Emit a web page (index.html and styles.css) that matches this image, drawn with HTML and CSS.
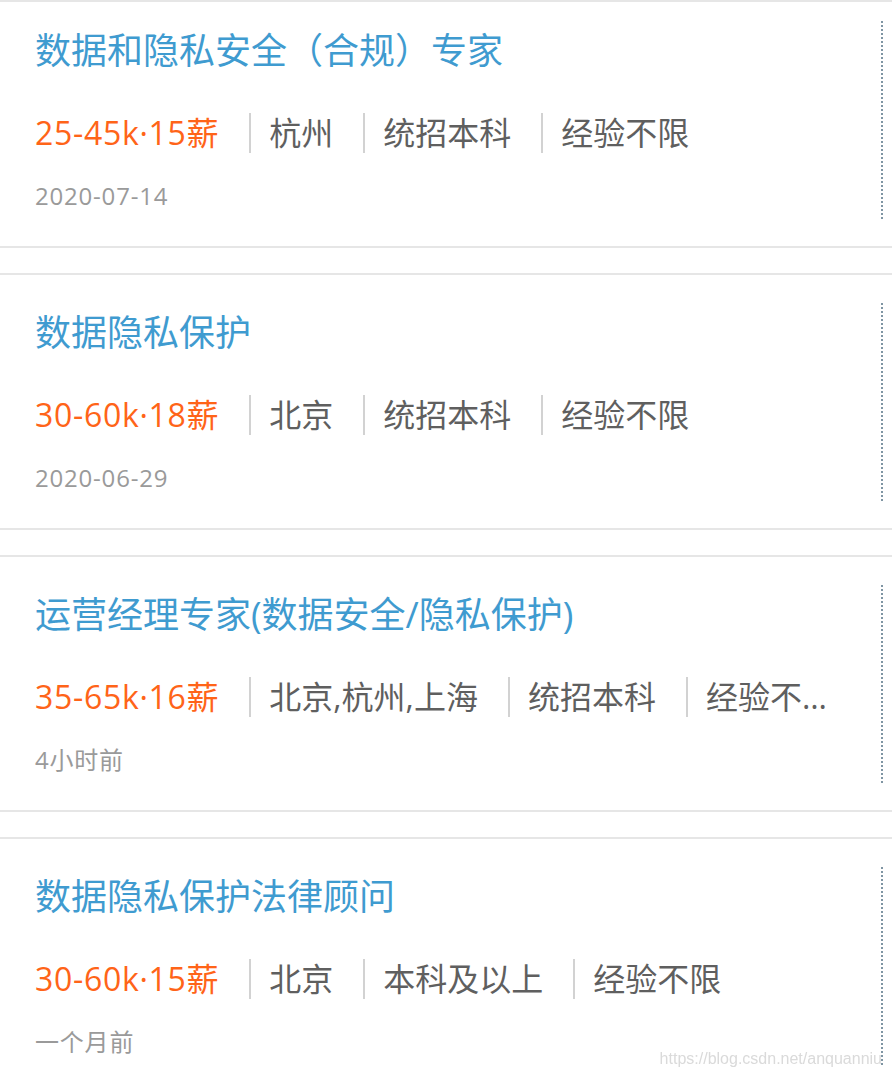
FILE: index.html
```html
<!DOCTYPE html>
<html lang="zh-CN">
<head>
  <meta charset="UTF-8" />
  <meta name="viewport" content="width=device-width, initial-scale=1" />
  <title>职位列表</title>
  <link rel="stylesheet" href="styles.css">
</head>
<body>
  <ul class="job-list">
    <li class="job">
      <div class="job-body">
        <div class="job-main">
          <h2 class="job-title">数据和隐私安全（合规）专家</h2>
          <div class="job-meta">
            <span class="salary">25-45k·15薪</span>
            <span>杭州</span>
            <span>统招本科</span>
            <span class="last"><span class="clip">经验不限</span></span>
          </div>
          <p class="job-time">2020-07-14</p>
        </div>
        <div class="job-side"></div>
      </div>
    </li>
    <li class="job">
      <div class="job-body">
        <div class="job-main">
          <h2 class="job-title">数据隐私保护</h2>
          <div class="job-meta">
            <span class="salary">30-60k·18薪</span>
            <span>北京</span>
            <span>统招本科</span>
            <span class="last"><span class="clip">经验不限</span></span>
          </div>
          <p class="job-time">2020-06-29</p>
        </div>
        <div class="job-side"></div>
      </div>
    </li>
    <li class="job">
      <div class="job-body">
        <div class="job-main">
          <h2 class="job-title">运营经理专家(数据安全/隐私保护)</h2>
          <div class="job-meta">
            <span class="salary">35-65k·16薪</span>
            <span>北京,杭州,上海</span>
            <span>统招本科</span>
            <span class="last"><span class="clip">经验不限</span></span>
          </div>
          <p class="job-time">4小时前</p>
        </div>
        <div class="job-side"></div>
      </div>
    </li>
    <li class="job">
      <div class="job-body">
        <div class="job-main">
          <h2 class="job-title">数据隐私保护法律顾问</h2>
          <div class="job-meta">
            <span class="salary">30-60k·15薪</span>
            <span>北京</span>
            <span>本科及以上</span>
            <span class="last"><span class="clip">经验不限</span></span>
          </div>
          <p class="job-time">一个月前</p>
        </div>
        <div class="job-side"></div>
      </div>
    </li>
  </ul>

  <div class="watermark">https://blog.csdn.net/anquanniu</div>
</body>
</html>
```

FILE: styles.css
```css
html, body {
  height: 100%;
}
body {
  margin: 0;
  background: #fff;
  font-family: "Open Sans", "Noto Sans CJK SC", sans-serif;
  overflow: hidden;
}
.job-list {
  list-style: none;
  margin: 0;
  padding: 0;
}
.job {
  border-top: 2px solid #e6e6e6;
  border-bottom: 2px solid #e6e6e6;
  margin-bottom: 25px;
}
.job-body {
  display: flex;
  padding: 28px 0 27px 35px;
}
.job:first-child .job-body {
  padding-top: 19px;
}
.job-main {
  flex: 1;
  min-width: 0;
  padding-right: 49px;
}
.job-side {
  width: 9px;
  border-left: 2px dotted #7f95a3;
}
.job-title {
  margin: 0;
  font-size: 36px;
  font-weight: normal;
  line-height: 60px;
  color: #3f9bd0;
  white-space: nowrap;
}
.job-meta {
  display: flex;
  margin-top: 32px;
  font-size: 32px;
  line-height: 40px;
  color: #5f5f5f;
  white-space: nowrap;
}
.job-meta > span {
  flex-shrink: 0;
}
.job-meta > span + span {
  margin-left: 30px;
  padding-left: 18px;
  border-left: 2px solid #d2d2d2;
}
.job-meta .last {
  flex-shrink: 1;
  min-width: 0;
}
.job-meta .clip {
  display: block;
  margin: -4px 0;
  line-height: 48px;
  overflow: hidden;
  text-overflow: ellipsis;
}
.job-meta .salary {
  color: #ff6418;
  letter-spacing: 0.7px;
}
.job-time {
  margin: 20px 0 0;
  font-size: 24px;
  line-height: 46px;
  color: #9a9a9a;
  letter-spacing: 0.8px;
}
.watermark {
  position: fixed;
  right: 10px;
  bottom: 7px;
  font-family: "Liberation Sans", Arial, sans-serif;
  font-size: 16px;
  line-height: 18px;
  color: #dadada;
}
```
